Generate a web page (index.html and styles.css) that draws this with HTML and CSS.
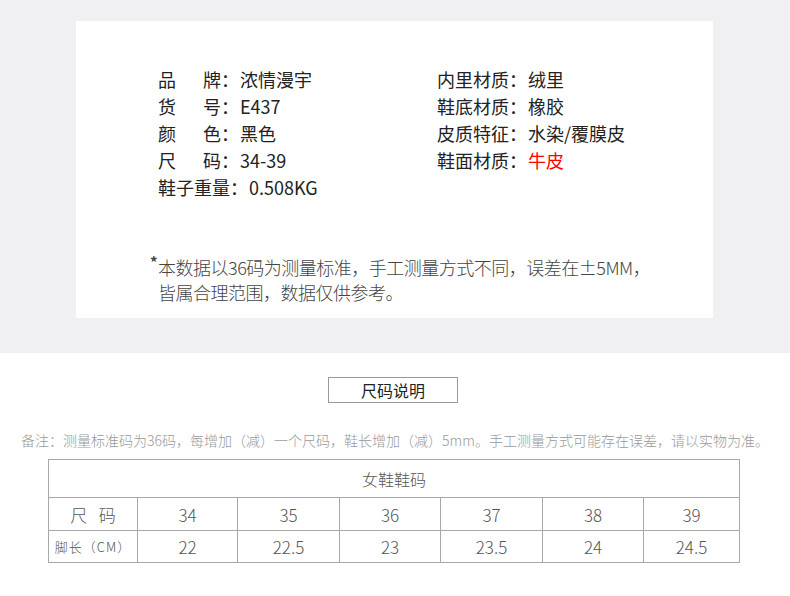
FILE: index.html
```html
<!DOCTYPE html>
<html lang="zh-CN">
<head>
<meta charset="utf-8">
<link rel="stylesheet" href="styles.css">
</head>
<body>
<section class="top">
  <div class="card">
    <div class="specs">
      <div class="col col-left">
        <div class="row"><span class="lbl"><span>品</span><span>牌</span></span><span class="colon">：</span><span>浓情漫宇</span></div>
        <div class="row"><span class="lbl"><span>货</span><span>号</span></span><span class="colon">：</span><span>E437</span></div>
        <div class="row"><span class="lbl"><span>颜</span><span>色</span></span><span class="colon">：</span><span>黑色</span></div>
        <div class="row"><span class="lbl"><span>尺</span><span>码</span></span><span class="colon">：</span><span>34-39</span></div>
        <div class="row"><span>鞋子重量</span><span class="colon">：</span><span>0.508KG</span></div>
      </div>
      <div class="col col-right">
        <div class="row"><span>内里材质</span><span class="colon">：</span><span>绒里</span></div>
        <div class="row"><span>鞋底材质</span><span class="colon">：</span><span>橡胶</span></div>
        <div class="row"><span>皮质特征</span><span class="colon">：</span><span>水染/覆膜皮</span></div>
        <div class="row"><span>鞋面材质</span><span class="colon">：</span><span class="red">牛皮</span></div>
      </div>
    </div>
    <p class="note"><span class="star">*</span>本数据以36码为测量标准，手工测量方式不同，误差在±5MM，<br>皆属合理范围，数据仅供参考。</p>
  </div>
</section>
<section class="bottom">
  <div class="title">尺码说明</div>
  <p class="remark">备注：测量标准码为36码，每增加（减）一个尺码，鞋长增加（减）5mm。手工测量方式可能存在误差，请以实物为准。</p>
  <table class="size">
    <colgroup>
      <col class="w1"><col class="w2"><col class="w3"><col class="w4"><col class="w5"><col class="w6"><col class="w7">
    </colgroup>
    <tr class="r1"><td colspan="7">女鞋鞋码</td></tr>
    <tr class="r2"><td>尺&nbsp;&nbsp;&nbsp;码</td><td>34</td><td>35</td><td>36</td><td>37</td><td>38</td><td>39</td></tr>
    <tr class="r3"><td class="small">脚长（CM）</td><td>22</td><td>22.5</td><td>23</td><td>23.5</td><td>24</td><td>24.5</td></tr>
  </table>
</section>
</body>
</html>
```

FILE: styles.css
```css
* { box-sizing: border-box; }
html, body { margin: 0; padding: 0; }
body {
  width: 790px;
  background: #fff;
  font-family: "Noto Sans CJK SC", "Noto Sans", sans-serif;
  color: #222;
}
.top {
  background: #f0f0f2;
  padding: 21px 0 35px 76px;
}
.card {
  width: 637px;
  height: 297px;
  background: #fff;
  padding: 45px 0 0 82px;
}
.specs {
  display: flex;
  font-size: 18px;
  line-height: 27px;
}
.col-left { width: 279px; }
.row { display: flex; white-space: nowrap; }
.lbl {
  display: flex;
  justify-content: space-between;
  width: 63px;
}
.colon { width: 18px; margin-right: 1px; }
.red { color: #f00; }
.note {
  margin: 54px 0 0 0;
  padding-left: 0;
  text-indent: -8px;
  font-size: 18px;
  font-weight: 300;
  line-height: 25px;
  letter-spacing: -0.5px;
  color: #444;
  white-space: nowrap;
}
.star {
  display: inline-block;
  width: 8px;
  font-size: 15px;
  font-weight: 700;
  vertical-align: top;
  line-height: 14px;
  text-indent: 0;
}
.bottom {
  padding-top: 24px;
  height: 243px;
}
.title {
  width: 130px;
  height: 26px;
  margin-left: 328px;
  border: 1px solid #999;
  font-size: 16px;
  line-height: 24px;
  text-align: center;
  color: #222;
}
.remark {
  margin: 27px 0 0 0;
  font-size: 14px;
  font-weight: 300;
  line-height: 20px;
  color: #999;
  text-align: center;
  white-space: nowrap;
}
.size {
  margin: 9px 0 0 48px;
  width: 691px;
  border-collapse: collapse;
  color: #555;
  table-layout: fixed;
}
.w1 { width: 89px; }
.w2 { width: 100px; }
.w3 { width: 102px; }
.w4 { width: 101px; }
.w5 { width: 102px; }
.w6 { width: 101px; }
.w7 { width: 96px; }
.size td {
  border: 1px solid #a8a8a8;
  text-align: center;
  padding: 0;
  font-size: 17px;
  font-weight: 300;
}
.r1 td { height: 38px; font-size: 16px; }
.r2 td { height: 33px; }
.r3 td { height: 32px; }
.size td.small { font-size: 13px; letter-spacing: 1px; }
```
